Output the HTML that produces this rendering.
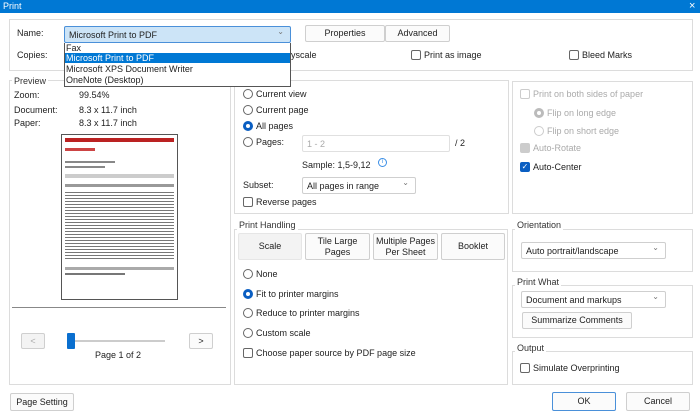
<!DOCTYPE html>
<html><head><meta charset="utf-8"><style>
*{box-sizing:border-box;margin:0;padding:0}
body{width:700px;height:417px;background:#fff;font-family:"Liberation Sans",sans-serif;font-size:9px;color:#222;position:relative;overflow:hidden}
.a{position:absolute;white-space:nowrap}
.box{position:absolute;border:1px solid #dcdcdc}
.lg{position:absolute;background:#fff;padding:0 2px;font-size:9px;color:#333}
.btn{position:absolute;border:1px solid #cfcfcf;background:#fbfbfb;border-radius:2px;text-align:center;display:flex;align-items:center;justify-content:center;line-height:1.2}
.sel{position:absolute;border:1px solid #cfcfcf;background:#fff;border-radius:2px;padding-left:4px;display:flex;align-items:center}
.sel:after{content:"⌄";position:absolute;right:6px;top:0;font-size:8px;color:#777}
.inp{position:absolute;border:1px solid #e0e0e0;background:#fff;border-radius:2px;padding-left:4px;display:flex;align-items:center;color:#aaa}
.rb{position:absolute;width:10px;height:10px;border:1px solid #666;border-radius:50%;background:#fff}
.rb.on{border:3px solid #0a5ec2}
.cb{position:absolute;width:10px;height:10px;border:1px solid #666;border-radius:2px;background:#fff}
.dis{color:#aaa}
</style></head><body>
<div class="a" style="left:0;top:0;width:700px;height:13px;background:#0078d4"></div>
<div class="a" style="left:3px;top:1px;color:#fff;font-size:9px">Print</div>
<div class="a" style="left:689px;top:0px;color:#fff;font-size:11px">×</div>

<div class="box" style="left:9px;top:19px;width:684px;height:52px"></div>
<div class="a" style="left:17px;top:28px">Name:</div>
<div class="a" style="left:17px;top:50px">Copies:</div>
<div class="sel" style="left:64px;top:26px;width:227px;height:17px;background:#cce4f7;border-color:#4a90d9">Microsoft Print to PDF</div>
<div class="btn" style="left:305px;top:25px;width:80px;height:17px">Properties</div>
<div class="btn" style="left:385px;top:25px;width:65px;height:17px">Advanced</div>
<div class="a" style="left:291px;top:50px">yscale</div>
<div class="cb" style="left:411px;top:50px"></div><div class="a" style="left:424px;top:50px">Print as image</div>
<div class="cb" style="left:569px;top:50px"></div><div class="a" style="left:582px;top:50px">Bleed Marks</div>

<div class="box" style="left:9px;top:80px;width:222px;height:305px"></div>
<div class="lg" style="left:12px;top:76px">Preview</div>
<div class="a" style="left:14px;top:90px">Zoom:</div><div class="a" style="left:79px;top:90px">99.54%</div>
<div class="a" style="left:14px;top:105px">Document:</div><div class="a" style="left:79px;top:105px">8.3 x 11.7 inch</div>
<div class="a" style="left:14px;top:118px">Paper:</div><div class="a" style="left:79px;top:118px">8.3 x 11.7 inch</div>
<div class="a" style="left:61px;top:134px;width:117px;height:166px;border:1px solid #555;background:#fff;padding:3px">
<div style="height:4px;background:#b22"></div>
<div style="margin-top:6px;height:3px;width:30px;background:#c44"></div>
<div style="margin-top:10px;height:2px;width:50px;background:#888"></div>
<div style="margin-top:3px;height:2px;width:40px;background:#888"></div>
<div style="margin-top:6px;height:4px;background:#ccc"></div>
<div style="margin-top:6px;height:3px;background:#999"></div>
<div style="margin-top:4px;height:70px;background:repeating-linear-gradient(#fff 0 1px,#777 1px 2px,#fff 2px 3px)"></div>
<div style="margin-top:6px;height:3px;background:#aaa"></div>
<div style="margin-top:3px;height:2px;width:60px;background:#777"></div>
</div>
<div class="a" style="left:12px;top:307px;width:214px;height:1px;background:#888"></div>
<div class="btn" style="left:21px;top:333px;width:24px;height:16px;color:#aaa;background:#f3f3f3">&lt;</div>
<div class="a" style="left:67px;top:340px;width:98px;height:2px;background:#ccc"></div>
<div class="a" style="left:67px;top:333px;width:8px;height:16px;background:#0a6fcf;border-radius:1px"></div>
<div class="btn" style="left:189px;top:333px;width:24px;height:16px">&gt;</div>
<div class="a" style="left:95px;top:350px">Page 1 of 2</div>
<div class="btn" style="left:10px;top:393px;width:64px;height:18px">Page Setting</div>

<div class="box" style="left:234px;top:80px;width:275px;height:134px"></div>
<div class="rb" style="left:243px;top:89px"></div><div class="a" style="left:256px;top:89px">Current view</div>
<div class="rb" style="left:243px;top:105px"></div><div class="a" style="left:256px;top:105px">Current page</div>
<div class="rb on" style="left:243px;top:121px"></div><div class="a" style="left:256px;top:121px">All pages</div>
<div class="rb" style="left:243px;top:137px"></div><div class="a" style="left:256px;top:137px">Pages:</div>
<div class="inp" style="left:302px;top:135px;width:148px;height:17px">1 - 2</div>
<div class="a" style="left:455px;top:138px">/ 2</div>
<div class="a" style="left:302px;top:160px">Sample: 1,5-9,12</div>
<div class="a" style="left:378px;top:158px;width:9px;height:9px;border:1px solid #3a8ee6;border-radius:50%;font-size:6px;color:#3a8ee6;text-align:center;line-height:7px">i</div>
<div class="a" style="left:243px;top:180px">Subset:</div>
<div class="sel" style="left:302px;top:177px;width:114px;height:17px">All pages in range</div>
<div class="cb" style="left:243px;top:197px"></div><div class="a" style="left:256px;top:197px">Reverse pages</div>

<div class="box" style="left:234px;top:229px;width:274px;height:156px"></div>
<div class="lg" style="left:237px;top:220px">Print Handling</div>
<div class="btn" style="left:238px;top:233px;width:64px;height:27px;background:#f3f3f3;border-color:#e6e6e6">Scale</div>
<div class="btn" style="left:305px;top:233px;width:65px;height:27px">Tile Large<br>Pages</div>
<div class="btn" style="left:373px;top:233px;width:65px;height:27px">Multiple Pages<br>Per Sheet</div>
<div class="btn" style="left:441px;top:233px;width:64px;height:27px">Booklet</div>
<div class="rb" style="left:243px;top:269px"></div><div class="a" style="left:256px;top:269px">None</div>
<div class="rb on" style="left:243px;top:289px"></div><div class="a" style="left:256px;top:289px">Fit to printer margins</div>
<div class="rb" style="left:243px;top:308px"></div><div class="a" style="left:256px;top:308px">Reduce to printer margins</div>
<div class="rb" style="left:243px;top:328px"></div><div class="a" style="left:256px;top:328px">Custom scale</div>
<div class="cb" style="left:243px;top:348px"></div><div class="a" style="left:256px;top:348px">Choose paper source by PDF page size</div>

<div class="box" style="left:512px;top:81px;width:181px;height:133px"></div>
<div class="cb" style="left:520px;top:89px;border-color:#ccc"></div><div class="a dis" style="left:533px;top:89px">Print on both sides of paper</div>
<div class="rb" style="left:534px;top:108px;border:3px solid #bbb"></div><div class="a dis" style="left:547px;top:108px">Flip on long edge</div>
<div class="rb" style="left:534px;top:126px;border-color:#ccc"></div><div class="a dis" style="left:547px;top:126px">Flip on short edge</div>
<div class="cb" style="left:520px;top:143px;background:#ccc;border-color:#ccc"></div><div class="a dis" style="left:533px;top:143px">Auto-Rotate</div>
<div class="cb" style="left:520px;top:162px;background:#0a5ec2;border-color:#0a5ec2;color:#fff;font-size:8px;line-height:8px;text-align:center">✓</div><div class="a" style="left:533px;top:162px">Auto-Center</div>

<div class="box" style="left:512px;top:229px;width:181px;height:43px"></div>
<div class="lg" style="left:515px;top:220px">Orientation</div>
<div class="sel" style="left:521px;top:242px;width:145px;height:17px">Auto portrait/landscape</div>

<div class="box" style="left:512px;top:285px;width:181px;height:53px"></div>
<div class="lg" style="left:515px;top:277px">Print What</div>
<div class="sel" style="left:521px;top:291px;width:145px;height:17px">Document and markups</div>
<div class="btn" style="left:522px;top:312px;width:110px;height:17px">Summarize Comments</div>

<div class="box" style="left:512px;top:351px;width:181px;height:34px"></div>
<div class="lg" style="left:515px;top:343px">Output</div>
<div class="cb" style="left:520px;top:363px"></div><div class="a" style="left:533px;top:363px">Simulate Overprinting</div>

<div class="btn" style="left:552px;top:392px;width:64px;height:19px;border-color:#4a90d9">OK</div>
<div class="btn" style="left:626px;top:392px;width:64px;height:19px">Cancel</div>

<div class="a" style="left:64px;top:43px;width:227px;height:44px;background:#fff;border:1px solid #555;border-top:none"></div>
<div class="a" style="left:66px;top:43px">Fax</div>
<div class="a" style="left:65px;top:53px;width:225px;height:10px;background:#0078d4"></div>
<div class="a" style="left:66px;top:53px;color:#fff">Microsoft Print to PDF</div>
<div class="a" style="left:66px;top:64px">Microsoft XPS Document Writer</div>
<div class="a" style="left:66px;top:75px">OneNote (Desktop)</div>
</body></html>
